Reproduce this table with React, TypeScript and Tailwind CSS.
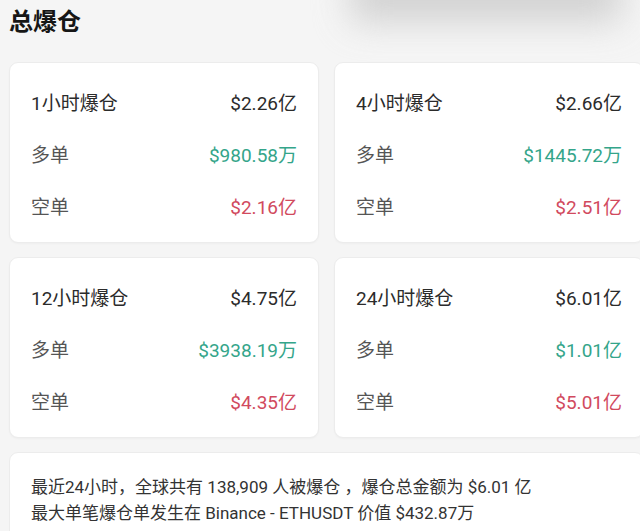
import React from 'react';

type Stat = {
  title: string;
  total: string;
  long: string;
  short: string;
};

const stats: Stat[] = [
  { title: '1小时爆仓', total: '$2.26亿', long: '$980.58万', short: '$2.16亿' },
  { title: '4小时爆仓', total: '$2.66亿', long: '$1445.72万', short: '$2.51亿' },
  { title: '12小时爆仓', total: '$4.75亿', long: '$3938.19万', short: '$4.35亿' },
  { title: '24小时爆仓', total: '$6.01亿', long: '$1.01亿', short: '$5.01亿' },
];

function StatCard({ stat }: { stat: Stat }) {
  return (
    <div className="bg-white rounded-[9px] border border-[#ececec] shadow-[0_1px_2px_rgba(0,0,0,0.03)] px-[21px] pt-[15px] pb-[10px] h-[181px]">
      <div className="flex items-center justify-between h-[52px]">
        <span className="text-[19px] text-[#2b2b2b]">{stat.title}</span>
        <span className="text-[19px] text-[#2b2b2b]">{stat.total}</span>
      </div>
      <div className="flex items-center justify-between h-[52px]">
        <span className="text-[19px] text-[#555]">多单</span>
        <span className="text-[19px] text-[#34a58a]">{stat.long}</span>
      </div>
      <div className="flex items-center justify-between h-[52px]">
        <span className="text-[19px] text-[#555]">空单</span>
        <span className="text-[19px] text-[#d14a5e]">{stat.short}</span>
      </div>
    </div>
  );
}

export default function App() {
  return (
    <div
      className="relative w-[640px] h-[531px] overflow-hidden bg-[#f5f5f5] pl-[9px]"
      style={{ fontFamily: 'Roboto, "Noto Sans CJK SC", sans-serif' }}
    >
      {/* blurred shadow of something floating above */}
      <div className="absolute left-[350px] top-[-34px] w-[272px] h-[56px] bg-[#c9c9c9] blur-[18px] opacity-80" />

      <h1
        className="relative text-[24px] font-bold text-[#161616] leading-[30px] pt-[5px] mb-[27px]"
        style={{ fontFamily: '"Noto Sans CJK SC", sans-serif' }}
      >
        总爆仓
      </h1>

      <div className="relative grid grid-cols-[310px_310px] gap-x-[15px] gap-y-[14px]">
        {stats.map((s) => (
          <StatCard key={s.title} stat={s} />
        ))}
        <div className="col-span-2 bg-white rounded-[9px] border border-[#ececec] px-[21px] pt-[21px] pb-[20px] text-[17px] leading-[26px] text-[#333]">
          <p>最近24小时，全球共有 138,909 人被爆仓 ，爆仓总金额为 $6.01 亿</p>
          <p>最大单笔爆仓单发生在 Binance - ETHUSDT 价值 $432.87万</p>
        </div>
      </div>
    </div>
  );
}
